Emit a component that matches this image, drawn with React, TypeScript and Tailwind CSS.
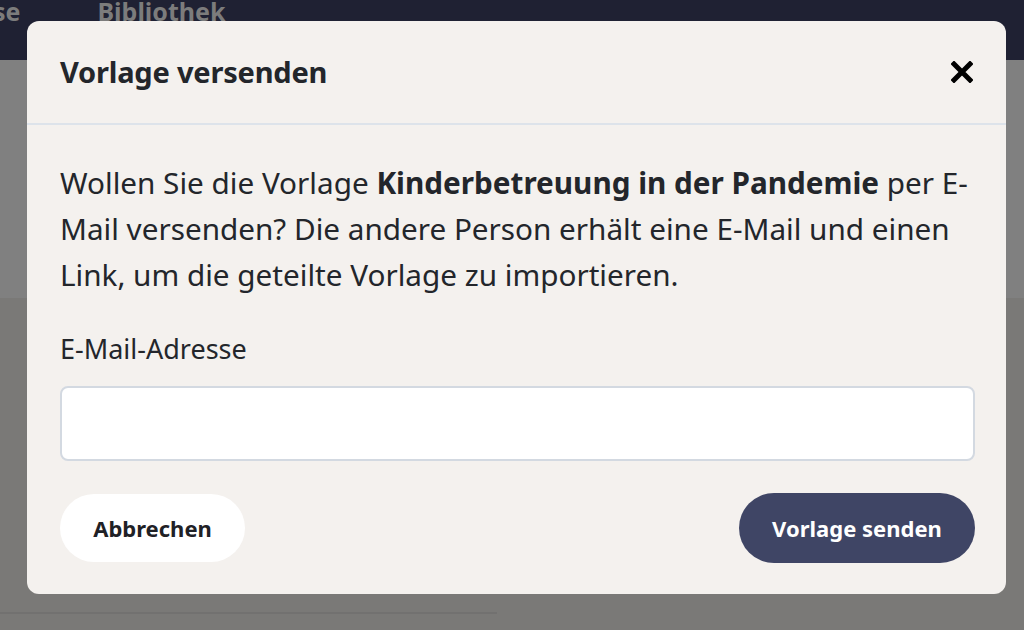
import React from "react";

export default function App() {
  const font = { fontFamily: '"Noto Sans", "Open Sans", sans-serif' };
  return (
    <div className="relative w-[1024px] h-[630px] overflow-hidden bg-[#7a7977]" style={font}>
      {/* dimmed background page */}
      <div className="flex flex-col h-full">
        <div className="h-[60px] bg-[#1f2133] relative text-[25px] font-bold text-[#7c7c7c]">
          <div className="flex items-start -mt-[5px]">
            <span className="-ml-[7px] leading-[32px]">se</span>
            <span className="ml-[77px] leading-[32px]">Bibliothek</span>
          </div>
        </div>
        <div className="h-[238px] bg-[#808080]" />
        <div className="flex-1 bg-[#7a7977] pt-[314px]">
          <div className="w-[497px] h-[2px] bg-[#727170]" />
        </div>
      </div>

      {/* modal */}
      <div className="absolute left-[27px] top-[21px] w-[979px] h-[573px] rounded-[12px] bg-[#f4f1ee] flex flex-col">
        <div className="h-[104px] border-b-2 border-[#dde3ea] flex items-center justify-between pl-[33px] pr-[32px] shrink-0">
          <h2 className="text-[29px] font-bold text-[#23262b] tracking-[-0.2px]">Vorlage versenden</h2>
          <svg width="22" height="22" viewBox="0 0 22 22" className="mr-[1px]">
            <path d="M3 3 L19 19 M19 3 L3 19" stroke="#000" strokeWidth="5" strokeLinecap="square" />
          </svg>
        </div>
        <div className="flex flex-col pl-[33px] pr-[31px] pt-[35px]">
          <p className="text-[29.7px] leading-[46px] text-[#23262b]">
            Wollen Sie die Vorlage <strong className="font-bold">Kinderbetreuung in der Pandemie</strong> per E-
            <br />
            Mail versenden? Die andere Person erhält eine E-Mail und einen
            <br />
            Link, um die geteilte Vorlage zu importieren.
          </p>
          <label className="mt-[35px] text-[27px] leading-[32px] text-[#23262b]">E-Mail-Adresse</label>
          <input
            type="text"
            className="mt-[21px] h-[75px] w-full rounded-[8px] border-2 border-[#d3d9e1] bg-white outline-none"
          />
          <div className="mt-[32px] flex items-center justify-between">
            <button className="h-[68px] w-[185px] rounded-full bg-white text-[22px] font-bold text-[#1f2126]">
              Abbrechen
            </button>
            <button className="h-[70px] w-[236px] rounded-full bg-[#3f4565] text-[22px] font-bold text-white">
              Vorlage senden
            </button>
          </div>
        </div>
      </div>
    </div>
  );
}
